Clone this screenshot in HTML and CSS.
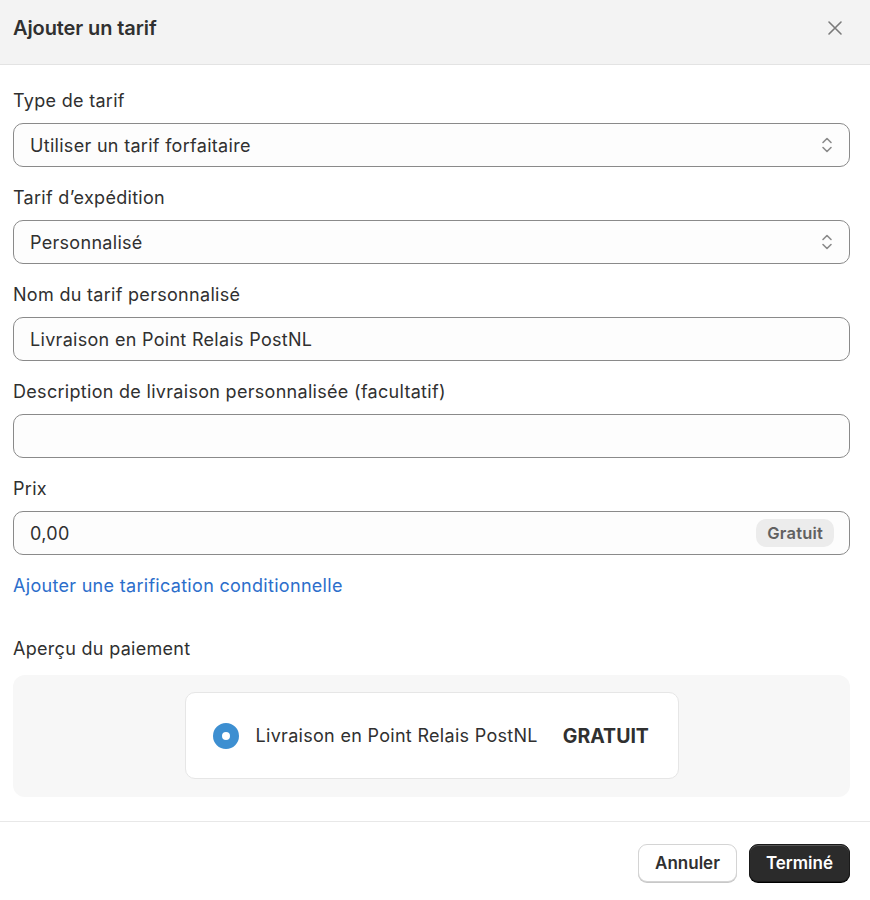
FILE: index.html
```html
<!DOCTYPE html>
<html lang="fr">
<head>
    <meta charset="UTF-8">
    <meta name="viewport" content="width=device-width, initial-scale=1.0">
    <title>Ajouter un tarif</title>
    <link rel="stylesheet" href="styles.css">
</head>
<body>
    <div class="modal">
        <div class="modal-header">
            <h2>Ajouter un tarif</h2>
            <button class="close" aria-label="Fermer">
                <svg width="16" height="16" viewBox="0 0 16 16"><path d="M2 2L14 14M14 2L2 14" stroke="#7a7a7a" stroke-width="1.6" stroke-linecap="round"/></svg>
            </button>
        </div>
        <div class="modal-body">
            <div class="field">
                <label>Type de tarif</label>
                <div class="input select">
                    <span>Utiliser un tarif forfaitaire</span>
                    <svg class="chevrons" width="12" height="18" viewBox="0 0 12 18"><path d="M2 6.5L6 2.5L10 6.5M2 11.5L6 15.5L10 11.5" fill="none" stroke="#8a8a8a" stroke-width="1.6" stroke-linecap="round" stroke-linejoin="round"/></svg>
                </div>
            </div>
            <div class="field">
                <label>Tarif d’expédition</label>
                <div class="input select">
                    <span>Personnalisé</span>
                    <svg class="chevrons" width="12" height="18" viewBox="0 0 12 18"><path d="M2 6.5L6 2.5L10 6.5M2 11.5L6 15.5L10 11.5" fill="none" stroke="#8a8a8a" stroke-width="1.6" stroke-linecap="round" stroke-linejoin="round"/></svg>
                </div>
            </div>
            <div class="field">
                <label>Nom du tarif personnalisé</label>
                <div class="input"><span>Livraison en Point Relais PostNL</span></div>
            </div>
            <div class="field">
                <label>Description de livraison personnalisée (facultatif)</label>
                <div class="input"></div>
            </div>
            <div class="field">
                <label>Prix</label>
                <div class="input">
                    <span>0,00</span>
                    <span class="badge">Gratuit</span>
                </div>
            </div>
            <a class="link" href="#">Ajouter une tarification conditionnelle</a>

            <div class="preview-title">Aperçu du paiement</div>
            <div class="preview">
                <div class="preview-card">
                    <span class="radio"></span>
                    <span class="preview-name">Livraison en Point Relais PostNL</span>
                    <span class="preview-price">GRATUIT</span>
                </div>
            </div>
        </div>
        <div class="modal-footer">
            <button class="btn">Annuler</button>
            <button class="btn btn-primary">Terminé</button>
        </div>
    </div>
</body>
</html>
```

FILE: styles.css
```css
body {
    margin: 0;
    padding: 0;
    font-family: 'Inter', 'Noto Sans', sans-serif;
    background-color: #fff;
    color: #303030;
}
.modal {
    width: 870px;
    background-color: #fff;
}
.modal-header {
    display: flex;
    align-items: center;
    justify-content: space-between;
    height: 65px;
    padding: 0 13px;
    background-color: #f3f3f3;
    border-bottom: 1px solid #e3e3e3;
    box-sizing: border-box;
}
.modal-header h2 {
    margin: -8px 0 0;
    font-size: 20px;
    font-weight: 600;
    color: #303030;
    letter-spacing: -0.1px;
}
.close {
    background: none;
    border: none;
    padding: 0;
    margin-right: 14px;
    margin-top: -8px;
    display: flex;
    cursor: pointer;
}
.modal-body {
    padding: 24px 20px 24px 13px;
}
.field {
    margin-bottom: 19px;
}
.field label {
    display: block;
    font-size: 18px;
    letter-spacing: 0.3px;
    line-height: 24px;
    margin-bottom: 10px;
    color: #303030;
}
.input {
    display: flex;
    align-items: center;
    justify-content: space-between;
    height: 44px;
    box-sizing: border-box;
    padding: 0 16px;
    border: 1px solid #8a8a8a;
    border-radius: 10px;
    background-color: #fdfdfd;
    font-size: 18px;
    letter-spacing: 0.3px;
    color: #303030;
}
.select .chevrons {
    margin-right: 0;
}
.badge {
    background-color: #ececec;
    color: #616161;
    font-size: 16.5px;
    letter-spacing: 0.2px;
    font-weight: 600;
    line-height: 28px;
    padding: 0 11px;
    border-radius: 10px;
    margin-right: -1px;
}
.link {
    display: block;
    color: #2c6ecb;
    text-decoration: none;
    font-size: 18px;
    letter-spacing: 0.3px;
    line-height: 24px;
    margin-top: 19px;
}
.preview-title {
    font-size: 18px;
    letter-spacing: 0.3px;
    line-height: 24px;
    margin-top: 39px;
    margin-bottom: 14px;
}
.preview {
    display: flex;
    justify-content: center;
    padding: 17px 0 18px;
    background-color: #f7f7f7;
    border-radius: 12px;
}
.preview-card {
    display: flex;
    align-items: center;
    width: 494px;
    height: 87px;
    box-sizing: border-box;
    padding: 0 27px;
    background-color: #fff;
    border: 1px solid #e6e6e6;
    border-radius: 10px;
}
.radio {
    width: 8px;
    height: 8px;
    border: 9px solid #3d8fd1;
    border-radius: 50%;
    background-color: #fff;
    flex-shrink: 0;
}
.preview-name {
    margin-left: 17px;
    font-size: 18px;
    letter-spacing: 0.3px;
    color: #303030;
}
.preview-price {
    margin-left: 25px;
    font-size: 19.5px;
    font-weight: 700;
    color: #303030;
}
.modal-footer {
    display: flex;
    justify-content: flex-end;
    gap: 12px;
    padding: 22px 20px 20px;
    border-top: 1px solid #e8e8e8;
}
.btn {
    height: 38px;
    padding: 0 16px;
    font-family: 'Inter', 'Noto Sans', sans-serif;
    font-size: 17px;
    font-weight: 600;
    color: #303030;
    background-color: #fff;
    border: 1px solid #d4d4d4;
    border-radius: 9px;
    box-shadow: 0 1px 0 #c8c8c8;
    cursor: pointer;
}
.btn-primary {
    color: #fff;
    background-color: #2b2b2b;
    border-color: #1a1a1a;
    box-shadow: 0 1px 0 #000, inset 0 1px 0 #555;
}
```
